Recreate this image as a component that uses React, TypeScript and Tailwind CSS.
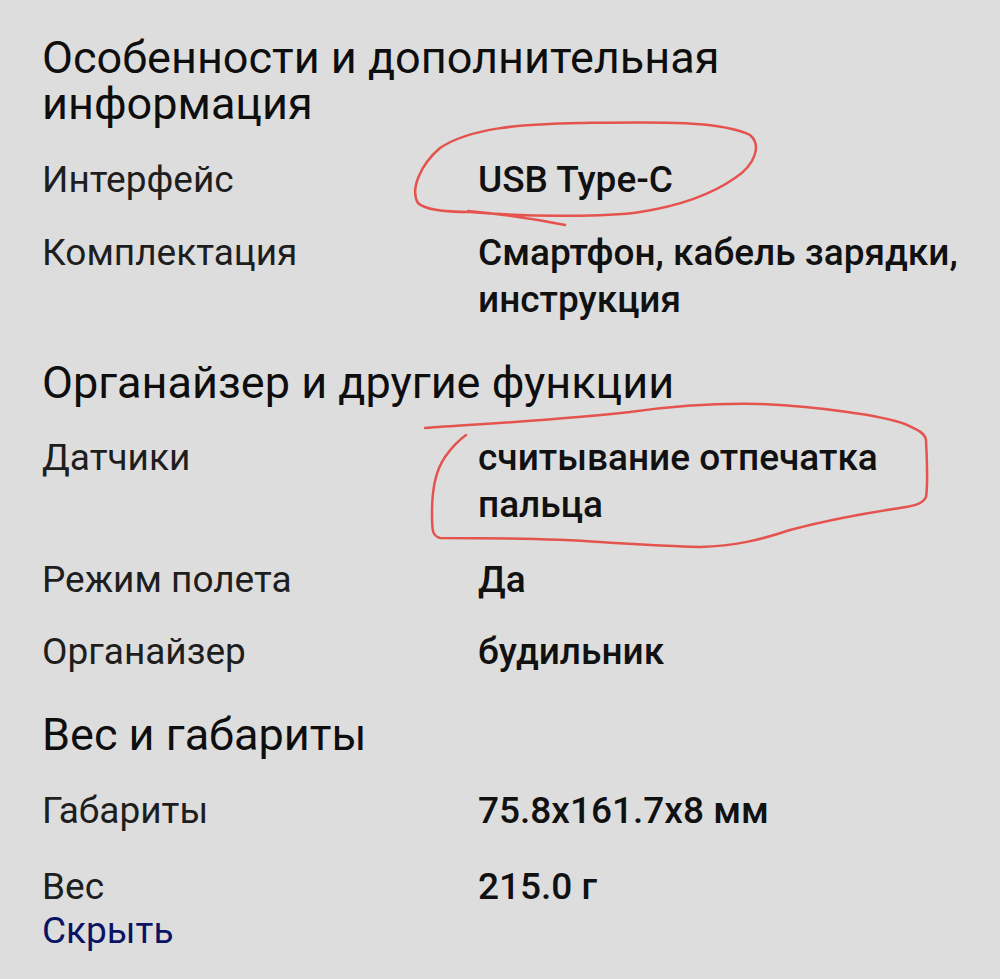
import React from "react";

const font = { fontFamily: "Roboto, 'Noto Sans', sans-serif" };

function Row({ label, value, mt }: { label: string; value: React.ReactNode; mt: string }) {
  return (
    <div className={`grid grid-cols-[436px_1fr] ${mt}`}>
      <div className="text-[37px] leading-[47px] text-[#1e1e1e] font-normal">{label}</div>
      <div className="text-[37px] leading-[47px] text-[#111111] font-medium">{value}</div>
    </div>
  );
}

function Heading({ children, mt }: { children: React.ReactNode; mt: string }) {
  return <h2 className={`text-[45px] leading-[46px] text-[#0e0e0e] font-normal ${mt}`}>{children}</h2>;
}

export default function App() {
  return (
    <div className="relative w-[1000px] h-[979px] bg-[#dddddd] overflow-hidden" style={font}>
      <div className="pl-[42px] pr-[20px] pt-[35px]">
        <Heading mt="mt-0">
          Особенности и дополнительная
          <br />
          информация
        </Heading>
        <Row mt="mt-[29px]" label="Интерфейс" value="USB Type-C" />
        <Row
          mt="mt-[26px]"
          label="Комплектация"
          value={
            <>
              Смартфон, кабель зарядки,
              <br />
              инструкция
            </>
          }
        />
        <Heading mt="mt-[37px]">Органайзер и другие функции</Heading>
        <Row
          mt="mt-[28px]"
          label="Датчики"
          value={
            <>
              считывание отпечатка
              <br />
              пальца
            </>
          }
        />
        <Row mt="mt-[28px]" label="Режим полета" value="Да" />
        <Row mt="mt-[25px]" label="Органайзер" value="будильник" />
        <Heading mt="mt-[37px]">Вес и габариты</Heading>
        <Row mt="mt-[29px]" label="Габариты" value="75.8x161.7x8 мм" />
        <Row mt="mt-[29px]" label="Вес" value="215.0 г" />
        <div className="text-[37px] leading-[47px] text-[#0b1464] -mt-[3px]">Скрыть</div>
      </div>
      <svg
        className="absolute inset-0 pointer-events-none"
        width="1000"
        height="979"
        viewBox="0 0 1000 979"
        fill="none"
      >
        <path
          d="M565 225 C540 220 500 214 468 211 M470 212 C445 212 425 210 418 203 C410 190 420 165 440 148 C470 128 520 124 580 123 C650 122 720 120 750 135 C762 145 755 165 735 178 C715 192 685 205 640 212 C600 218 520 216 470 212"
          stroke="#e5534f"
          strokeWidth="2.5"
          strokeLinecap="round"
          strokeLinejoin="round"
        />
        <path
          d="M425 428 C480 424 560 420 630 412 C680 405 720 403 760 404 C820 407 880 415 905 424 C918 430 925 433 926 440 C927 460 928 485 926 497 C922 505 912 506 900 508 C860 514 820 522 790 530 C760 540 735 546 700 547 C660 546 630 544 600 542 C560 539 480 538 440 538 C432 536 432 530 432 512 C432 490 436 470 445 457 C452 447 459 440 466 435"
          stroke="#e5534f"
          strokeWidth="2.5"
          strokeLinecap="round"
          strokeLinejoin="round"
        />
      </svg>
    </div>
  );
}
